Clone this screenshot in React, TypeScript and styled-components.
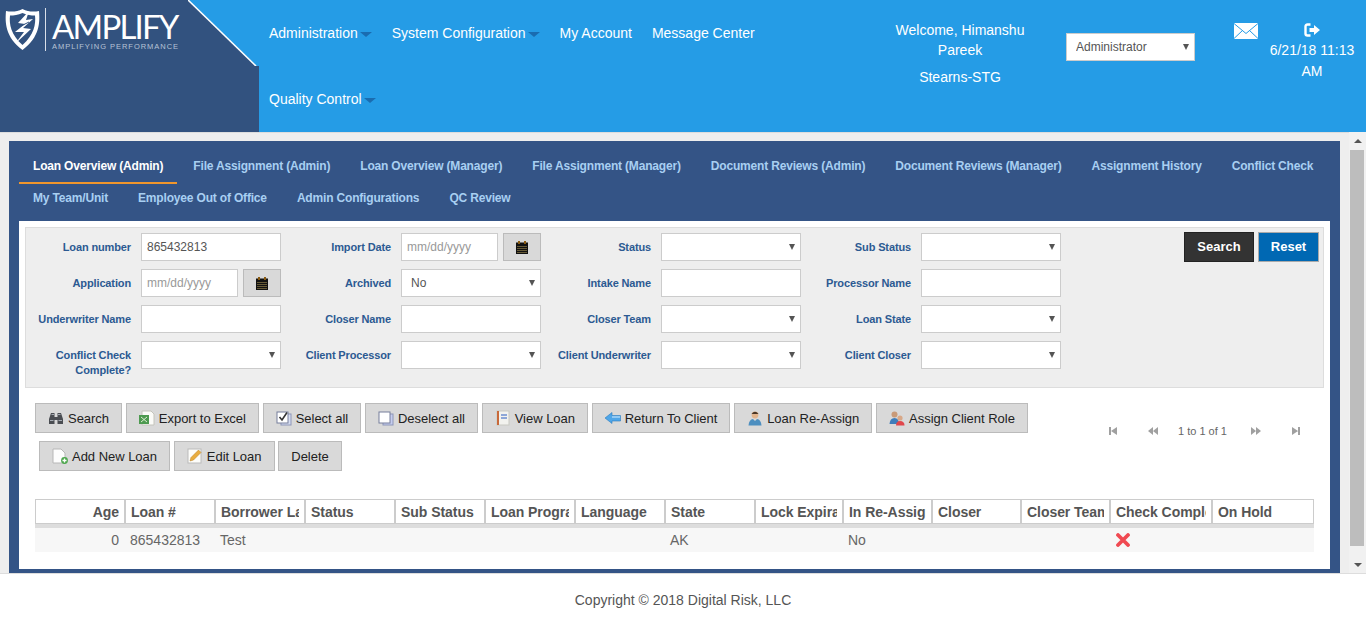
import React from 'react';
import styled, { createGlobalStyle } from 'styled-components';

const NAVY = '#32527f';
const BLUE = '#259ce6';

const GlobalStyle = createGlobalStyle`
  html, body {
    margin: 0;
    padding: 0;
    background: #fff;
    font-family: "Liberation Sans", Arial, sans-serif;
    overflow: hidden;
  }
  * {
    box-sizing: border-box;
  }
`;

const ShieldIcon = () => (
  <svg width="35" height="43" viewBox="0 0 35 43">
    <path
      d="M17.5 1 C23 4 29 4 34 3 C35 14 35 29 17.5 42 C0 29 0 14 1 3 C6 4 12 4 17.5 1 Z"
      fill="#fff"
    />
    <path
      d="M17.5 5 C13 7 9 7.5 5 7.5 C4 16 6 27 17.5 37 C29 27 31 16 30 7.5 C26 7.5 22 7 17.5 5 Z"
      fill={NAVY}
    />
    <path d="M24 3 L13 15 L20 16 L10 24 L19 24 L10 36 L26 21 L18 20 L28 11 L21 12 Z" fill="#fff" />
    <path d="M12 20 L24 14" stroke={NAVY} strokeWidth="1" />
  </svg>
);

const CalendarIcon = () => (
  <svg width="12" height="13" viewBox="0 0 12 13">
    <rect x="0" y="1.5" width="12" height="11.5" fill="#111" />
    <rect x="2" y="0" width="2" height="3" fill="#8a5a10" />
    <rect x="8" y="0" width="2" height="3" fill="#8a5a10" />
    <path d="M1 5.5 H11 M1 7.5 H11 M1 9.5 H11 M1 11.5 H11" stroke="#a08c50" strokeWidth="0.6" />
  </svg>
);

const EnvelopeIcon = () => (
  <svg width="24" height="16" viewBox="0 0 24 16">
    <rect width="24" height="16" fill="#fff" />
    <path d="M0 0.5 L12 10.5 L24 0.5 M0 15.5 L8.5 7.5 M24 15.5 L15.5 7.5" fill="none" stroke={BLUE} strokeWidth="1" />
  </svg>
);

const LogoutIcon = () => (
  <svg width="16" height="14" viewBox="0 0 16 14">
    <path d="M6.5 1.5 H3.5 Q1.5 1.5 1.5 3.5 V10.5 Q1.5 12.5 3.5 12.5 H6.5" fill="none" stroke="#fff" strokeWidth="2.4" />
    <path d="M5.5 5 H10 V2 L16 7 L10 12 V9 H5.5 Z" fill="#fff" />
  </svg>
);

const BinocularsIcon = () => (
  <svg width="16" height="16" viewBox="0 0 16 16">
    <path d="M3 3 H6.5 V7 H9.5 V3 H13 L15 9 V14 H9.5 V10 H6.5 V14 H1 V9 Z" fill="#4a4d52" />
    <path d="M2 10.5 H5.5 M10.5 10.5 H14 M3.5 4.5 H6 M10 4.5 H12.5" stroke="#a6acb4" strokeWidth="1" />
  </svg>
);

const ExcelIcon = () => (
  <svg width="16" height="16" viewBox="0 0 16 16">
    <path d="M3 1 H12 L15 4 V15 H3 Z" fill="#fbfbf8" stroke="#c4c4bc" />
    <rect x="0" y="5" width="10" height="9" fill="#4d9a50" />
    <path d="M2 7 L8 12 M8 7 L2 12" stroke="#dcecd0" strokeWidth="1" />
  </svg>
);

const SelectAllIcon = () => (
  <svg width="16" height="16" viewBox="0 0 16 16">
    <rect x="5" y="4" width="10" height="11" fill="#d6dcf0" stroke="#8d96b8" />
    <rect x="1" y="2" width="11" height="11" fill="#fff" stroke="#767f9c" />
    <path d="M3.5 7 L6 10 L11 2.5" fill="none" stroke="#333" strokeWidth="1.6" />
  </svg>
);

const DeselectAllIcon = () => (
  <svg width="16" height="16" viewBox="0 0 16 16">
    <rect x="5" y="4" width="10" height="11" fill="#c6cdef" stroke="#8d96b8" />
    <rect x="1" y="2" width="11" height="11" fill="#fff" stroke="#767f9c" />
  </svg>
);

const ViewLoanIcon = () => (
  <svg width="16" height="16" viewBox="0 0 16 16">
    <rect x="2" y="1" width="12" height="14" fill="#f2f2ee" stroke="#c9c9c2" />
    <rect x="2" y="1" width="2" height="14" fill="#c8693a" />
    <path d="M6 5 H12 M6 8 H12" stroke="#6d8fd0" strokeWidth="1.4" />
  </svg>
);

const ReturnIcon = () => (
  <svg width="16" height="16" viewBox="0 0 16 16">
    <path d="M0 8 L7 2.5 V5.5 H15.5 V11 H7 V13.5 Z" fill="#4fa6e8" stroke="#2a7cc0" strokeWidth="0.6" />
    <path d="M7 7 H15" stroke="#bfe2fa" strokeWidth="1.2" />
  </svg>
);

const UserIcon = () => (
  <svg width="16" height="16" viewBox="0 0 16 16">
    <circle cx="8" cy="5" r="3.4" fill="#e2b48c" />
    <path d="M4.5 4 Q8 -0.5 11.5 4 Z" fill="#4a3626" />
    <path d="M1.5 15.5 Q2 9.5 6 9 L8 11 L10 9 Q14 9.5 14.5 15.5 Z" fill="#4d8fc0" />
  </svg>
);

const UsersIcon = () => (
  <svg width="16" height="16" viewBox="0 0 16 16">
    <circle cx="5.5" cy="4.5" r="3" fill="#c99a78" />
    <path d="M0.5 14 Q1 8 5.5 8 Q10 8 10 14 Z" fill="#3f7dbb" />
    <circle cx="11" cy="8" r="2.6" fill="#d8a888" />
    <path d="M7 15.5 Q7 11 11 11 Q15.5 11 15.5 15.5 Z" fill="#e0474c" />
  </svg>
);

const AddDocIcon = () => (
  <svg width="16" height="16" viewBox="0 0 16 16">
    <path d="M1 1 H9 L13 5 V15 H1 Z" fill="#fdfdfd" stroke="#b7b7b7" />
    <circle cx="12.5" cy="12.5" r="3.4" fill="#4ca64c" />
    <path d="M10.5 12.5 H14.5 M12.5 10.5 V14.5" stroke="#fff" strokeWidth="1.3" />
  </svg>
);

const EditIcon = () => (
  <svg width="16" height="16" viewBox="0 0 16 16">
    <rect x="1" y="1" width="13" height="14" fill="#fdfdfa" stroke="#bbb" />
    <path d="M3 13 L4 9.5 L11.5 2 L14 4.5 L6.5 12 Z" fill="#e9ad3f" stroke="#b87e22" strokeWidth="0.5" />
  </svg>
);

const RedCross = () => (
  <svg width="16" height="14" viewBox="0 0 16 14">
    <path d="M3 2 L13 12 M13 2 L3 12" stroke="#f04a52" strokeWidth="3.8" strokeLinecap="round" />
  </svg>
);

const PagerIcon = ({ kind }: { kind: 'first' | 'prev' | 'next' | 'last' }) => (
  <svg width="10" height="10" viewBox="0 0 10 10" fill="#a0a0a0">
    {kind === 'first' && <path d="M1 1 H3 V9 H1 Z M9 1 V9 L3 5 Z" />}
    {kind === 'prev' && <path d="M5 1 V9 L0 5 Z M10 1 V9 L5 5 Z" />}
    {kind === 'next' && <path d="M0 1 V9 L5 5 Z M5 1 V9 L10 5 Z" />}
    {kind === 'last' && <path d="M1 1 V9 L7 5 Z M7 1 H9 V9 H7 Z" />}
  </svg>
);

const TAB_ROWS = [
  'Loan Overview (Admin)',
  'File Assignment (Admin)',
  'Loan Overview (Manager)',
  'File Assignment (Manager)',
  'Document Reviews (Admin)',
  'Document Reviews (Manager)',
  'Assignment History',
  'Conflict Check',
  'My Team/Unit',
  'Employee Out of Office',
  'Admin Configurations',
  'QC Review',
];

const TOP_ACTIONS = [
  { label: 'Search', icon: <BinocularsIcon /> },
  { label: 'Export to Excel', icon: <ExcelIcon /> },
  { label: 'Select all', icon: <SelectAllIcon /> },
  { label: 'Deselect all', icon: <DeselectAllIcon /> },
  { label: 'View Loan', icon: <ViewLoanIcon /> },
  { label: 'Return To Client', icon: <ReturnIcon /> },
  { label: 'Loan Re-Assign', icon: <UserIcon /> },
  { label: 'Assign Client Role', icon: <UsersIcon /> },
];

const BOTTOM_ACTIONS = [
  { label: 'Add New Loan', icon: <AddDocIcon /> },
  { label: 'Edit Loan', icon: <EditIcon /> },
  { label: 'Delete', icon: null },
];

const COLUMNS = [
  'Age',
  'Loan #',
  'Borrower Last Name',
  'Status',
  'Sub Status',
  'Loan Program',
  'Language',
  'State',
  'Lock Expiration',
  'In Re-Assignment',
  'Closer',
  'Closer Team',
  'Check Complete',
  'On Hold',
];

const ROW: React.ReactNode[] = [
  '0',
  '865432813',
  'Test',
  '',
  '',
  '',
  '',
  'AK',
  '',
  'No',
  '',
  '',
  <RedCross key="cross" />,
  '',
];

const DateField = ({ id }: { id: string }) => (
  <DateGroup>
    <Field id={id} placeholder="mm/dd/yyyy" />
    <CalendarButton type="button">
      <CalendarIcon />
    </CalendarButton>
  </DateGroup>
);

const SelectField = ({ value, options = [''] }: { value?: string; options?: string[] }) => (
  <SelectWrap>
    <Select defaultValue={value}>
      {options.map((option) => (
        <option key={option}>{option}</option>
      ))}
    </Select>
  </SelectWrap>
);

const App = () => (
  <>
    <GlobalStyle />
    <Header>
      <LogoPanel>
        <LogoMark>
          <ShieldIcon />
          <LogoDivider />
          <LogoWords>
            <LogoName>AMPLIFY</LogoName>
            <LogoTagline>AMPLIFYING PERFORMANCE</LogoTagline>
          </LogoWords>
        </LogoMark>
        <LogoCorner viewBox="0 0 71 66" width="71" height="66">
          <polygon points="0,0 71,0 71,66 68,66" fill={BLUE} />
          <line x1="0" y1="0" x2="68" y2="66" stroke="#fff" strokeWidth="1.6" />
        </LogoCorner>
      </LogoPanel>
      <Nav>
        <NavItem $caret>Administration</NavItem>
        <NavItem $caret>System Configuration</NavItem>
        <NavItem>My Account</NavItem>
        <NavItem>Message Center</NavItem>
        <NavItem $caret>Quality Control</NavItem>
      </Nav>
      <Welcome>
        <WelcomeName>Welcome, Himanshu Pareek</WelcomeName>
        <WelcomeOrg>Stearns-STG</WelcomeOrg>
      </Welcome>
      <RoleSelect>
        <SelectField value="Administrator" options={['Administrator']} />
      </RoleSelect>
      <MailLink>
        <EnvelopeIcon />
      </MailLink>
      <Session>
        <LogoutIcon />
        <SessionDate>6/21/18 11:13 AM</SessionDate>
      </Session>
    </Header>

    <Main>
      <Panel>
        <Tabs>
          {TAB_ROWS.map((tab, index) => (
            <Tab key={tab} $active={index === 0}>
              {tab}
            </Tab>
          ))}
        </Tabs>
        <Content>
          <Filters>
            <FilterGrid>
              <Label>Loan number</Label>
              <Field defaultValue="865432813" />
              <Label>Import Date</Label>
              <DateField id="importDate" />
              <Label>Status</Label>
              <SelectField />
              <Label>Sub Status</Label>
              <SelectField />

              <Label>Application</Label>
              <DateField id="applicationDate" />
              <Label>Archived</Label>
              <SelectField value="No" options={['No', 'Yes']} />
              <Label>Intake Name</Label>
              <Field />
              <Label>Processor Name</Label>
              <Field />

              <Label>Underwriter Name</Label>
              <Field />
              <Label>Closer Name</Label>
              <Field />
              <Label>Closer Team</Label>
              <SelectField />
              <Label>Loan State</Label>
              <SelectField />

              <Label>Conflict Check Complete?</Label>
              <SelectField />
              <Label>Client Processor</Label>
              <SelectField />
              <Label>Client Underwriter</Label>
              <SelectField />
              <Label>Client Closer</Label>
              <SelectField />
            </FilterGrid>
            <FilterActions>
              <SearchButton type="button">Search</SearchButton>
              <ResetButton type="button">Reset</ResetButton>
            </FilterActions>
          </Filters>

          <Toolbar>
            <ActionGroups>
              <ActionRow>
                {TOP_ACTIONS.map(({ label, icon }) => (
                  <ActionButton key={label} type="button">
                    {icon}
                    {label}
                  </ActionButton>
                ))}
              </ActionRow>
              <ActionRow $indent>
                {BOTTOM_ACTIONS.map(({ label, icon }) => (
                  <ActionButton key={label} type="button">
                    {icon}
                    {label}
                  </ActionButton>
                ))}
              </ActionRow>
            </ActionGroups>
            <Pager>
              <PagerIcon kind="first" />
              <PagerIcon kind="prev" />
              <PagerText>1 to 1 of 1</PagerText>
              <PagerIcon kind="next" />
              <PagerIcon kind="last" />
            </Pager>
          </Toolbar>

          <Table>
            <HeaderRow>
              {COLUMNS.map((column, index) => (
                <HeaderCell key={column} $right={index === 0}>
                  <HeaderText>{column}</HeaderText>
                </HeaderCell>
              ))}
            </HeaderRow>
            <DataRow>
              {ROW.map((value, index) => (
                <DataCell key={COLUMNS[index]} $right={index === 0}>
                  {value}
                </DataCell>
              ))}
            </DataRow>
          </Table>
        </Content>
      </Panel>
      <Scrollbar>
        <ScrollArrow $up />
        <ScrollThumb />
        <ScrollArrow />
      </Scrollbar>
    </Main>

    <Footer>Copyright © 2018 Digital Risk, LLC</Footer>
  </>
);

export default App;

const Header = styled.header`
  display: flex;
  height: 132px;
  background: ${BLUE};
  color: #fff;
  font-size: 14px;
`;

const LogoPanel = styled.div`
  position: relative;
  flex: 0 0 259px;
  background: ${NAVY};
`;

const LogoMark = styled.div`
  display: flex;
  align-items: flex-start;
  padding: 8px 0 0 5px;
`;

const LogoDivider = styled.div`
  width: 1px;
  height: 43px;
  margin: 0 6px 0 5px;
  background: #d8dfe9;
`;

const LogoWords = styled.div`
  display: flex;
  flex-direction: column;
  padding-top: 2px;
`;

const LogoName = styled.span`
  font-family: Lato, "Liberation Sans", sans-serif;
  font-size: 33px;
  font-weight: 400;
  line-height: 33px;
  letter-spacing: -1.8px;
  color: #fff;
`;

const LogoTagline = styled.span`
  margin-top: -1px;
  font-size: 7.5px;
  line-height: 9px;
  letter-spacing: 0.96px;
  white-space: nowrap;
  color: #b7c3d6;
`;

const LogoCorner = styled.svg`
  position: absolute;
  top: 0;
  right: 0;
  display: block;
`;

const Nav = styled.nav`
  display: flex;
  flex-wrap: wrap;
  align-content: flex-start;
  flex: 0 0 621px;
`;

const NavItem = styled.a<{ $caret?: boolean }>`
  display: flex;
  align-items: center;
  height: 66px;
  padding: 0 10px;
  color: #fff;

  ${({ $caret }) =>
    $caret &&
    `
    &::after {
      content: '';
      margin: 2px 0 0 2px;
      border-style: solid;
      border-width: 5px 6px 0;
      border-color: #1a6cb0 transparent transparent;
    }
  `}
`;

const Welcome = styled.div`
  flex: 0 0 160px;
  padding: 20px 0 0;
  text-align: center;
  line-height: 20px;
`;

const WelcomeName = styled.div`
  width: 150px;
  margin: 0 auto;
`;

const WelcomeOrg = styled.div`
  margin-top: 7px;
`;

const RoleSelect = styled.div`
  flex: 0 0 129px;
  margin: 33px 0 0 26px;
`;

const MailLink = styled.a`
  display: block;
  height: 16px;
  margin: 23px 0 0 39px;
`;

const Session = styled.div`
  display: flex;
  flex-direction: column;
  align-items: center;
  width: 90px;
  margin: 23px 0 0 9px;
`;

const SessionDate = styled.div`
  margin-top: 3px;
  text-align: center;
  line-height: 21px;
`;

const Main = styled.main`
  display: flex;
  height: 442px;
  padding: 9px 0 0 9px;
  background: #eee;
  box-shadow: inset 0 1px 0 #ddd;
  border-bottom: 1px solid #ddd;
`;

const Panel = styled.section`
  flex: 0 0 1331px;
  padding: 9px 10px 4px 10px;
  background: #345486;
`;

const Tabs = styled.div`
  display: flex;
  flex-wrap: wrap;
`;

const Tab = styled.a<{ $active?: boolean }>`
  height: 34px;
  margin: 0 2px -2px 0;
  padding: 0 14px;
  font-size: 12px;
  font-weight: bold;
  line-height: 32px;
  letter-spacing: -0.175px;
  color: ${({ $active }) => ($active ? '#fff' : '#a8cff2')};
  border-bottom: 2px solid ${({ $active }) => ($active ? '#f0962c' : 'transparent')};
`;

const Content = styled.div`
  height: 348px;
  margin-top: 7px;
  padding: 6px;
  background: #fff;
`;

const Filters = styled.div`
  display: flex;
  justify-content: space-between;
  height: 161px;
  padding: 5px 4px 0 0;
  background: #eee;
  border: 1px solid #ddd;
`;

const FilterGrid = styled.div`
  display: grid;
  grid-template-columns: 105px 140px 100px 140px 100px 140px 100px 140px;
  grid-auto-rows: 28px;
  gap: 8px 10px;
`;

const Label = styled.label`
  padding-top: 7px;
  font-size: 11px;
  font-weight: bold;
  line-height: 15px;
  letter-spacing: -0.13px;
  text-align: right;
  color: #2c5a92;
`;

const Field = styled.input`
  width: 100%;
  min-width: 0;
  height: 28px;
  padding: 0 5px;
  font-family: inherit;
  font-size: 12px;
  color: #555;
  background: #fff;
  border: 1px solid #ccc;
  border-radius: 0;
  outline: none;

  &::placeholder {
    color: #999;
    opacity: 1;
  }
`;

const DateGroup = styled.div`
  display: grid;
  grid-template-columns: 97px 38px;
  gap: 5px;
`;

const CalendarButton = styled.button`
  display: flex;
  align-items: center;
  justify-content: center;
  height: 28px;
  padding: 0;
  background: #d9d9d9;
  border: 1px solid #bbb;
`;

const SelectWrap = styled.div`
  position: relative;
  height: 28px;

  &::after {
    content: '';
    position: absolute;
    top: 11px;
    right: 6px;
    border-style: solid;
    border-width: 6px 3.5px 0;
    border-color: #555 transparent transparent;
    pointer-events: none;
  }
`;

const Select = styled.select`
  display: block;
  width: 100%;
  height: 28px;
  padding: 0 9px;
  font-family: inherit;
  font-size: 12px;
  color: #555;
  background: #fff;
  border: 1px solid #ccc;
  border-radius: 0;
  appearance: none;
  outline: none;
`;

const FilterActions = styled.div`
  display: flex;
  gap: 4px;
  margin-top: -1px;
`;

const SearchButton = styled.button`
  width: 70px;
  height: 30px;
  padding: 0 0 2px;
  font-family: inherit;
  font-size: 13px;
  font-weight: bold;
  color: #fff;
  background: #333;
  border: 1px solid #222;
`;

const ResetButton = styled(SearchButton)`
  width: 61px;
  background: #0068b3;
  border-color: #aaa;
`;

const Toolbar = styled.div`
  display: flex;
  height: 111px;
  padding: 15px 0 0 10px;
`;

const ActionGroups = styled.div`
  display: flex;
  flex: 0 0 1060px;
  flex-direction: column;
  gap: 8px;
`;

const ActionRow = styled.div<{ $indent?: boolean }>`
  display: flex;
  gap: 3.8px;
  margin-left: ${({ $indent }) => ($indent ? '4px' : '0')};
`;

const ActionButton = styled.button`
  display: inline-flex;
  align-items: center;
  gap: 4px;
  height: 30px;
  padding: 0 12px;
  font-family: inherit;
  font-size: 13px;
  letter-spacing: -0.025px;
  white-space: nowrap;
  color: #222;
  background: #d9d9d9;
  border: 1px solid #bbb;
`;

const Pager = styled.div`
  display: flex;
  align-items: center;
  gap: 30px;
  height: 10px;
  margin: 23px 0 0 13px;
`;

const PagerText = styled.span`
  margin: 0 -6px 0 -10px;
  font-size: 11px;
  white-space: nowrap;
  color: #666;
`;

const COLUMN_TEMPLATE = '90px 90px 90px 90px 90px 90px 90px 90px 88px 89px 89px 89px 102px 102px';

const Table = styled.div`
  width: 1279px;
  margin-left: 10px;
`;

const HeaderRow = styled.div`
  display: grid;
  grid-template-columns: ${COLUMN_TEMPLATE};
  height: 29px;
  border-bottom: 4px solid #ddd;
`;

const HeaderCell = styled.div<{ $right?: boolean }>`
  min-width: 0;
  padding: 1px 5px 0;
  font-size: 14px;
  font-weight: bold;
  line-height: 22px;
  letter-spacing: -0.05px;
  text-align: ${({ $right }) => ($right ? 'right' : 'left')};
  color: #555;
  background: #fff;
  border: 1px solid #ccc;
`;

const HeaderText = styled.div`
  overflow: hidden;
  white-space: nowrap;
`;

const DataRow = styled.div`
  display: grid;
  grid-template-columns: ${COLUMN_TEMPLATE};
  height: 24px;
  background: #f7f7f7;
`;

const DataCell = styled.div<{ $right?: boolean }>`
  display: flex;
  align-items: center;
  justify-content: ${({ $right }) => ($right ? 'flex-end' : 'flex-start')};
  padding: 0 6px 0 5px;
  font-size: 14px;
  color: #666;
`;

const Scrollbar = styled.div`
  display: flex;
  flex: 0 0 17px;
  flex-direction: column;
  margin: -9px 0 0 9px;
  background: #f1f1f1;
`;

const ScrollThumb = styled.div`
  flex: 1;
  margin: 1px 2px 10px 1px;
  background: #bdbdbd;
`;

const ScrollArrow = styled.div<{ $up?: boolean }>`
  display: flex;
  flex: 0 0 17px;
  align-items: center;
  justify-content: center;

  &::before {
    content: '';
    border-style: solid;
    border-color: #555 transparent;
    border-width: ${({ $up }) => ($up ? '0 4px 4px' : '4px 4px 0')};
  }
`;

const Footer = styled.footer`
  height: 44px;
  padding-top: 18px;
  font-size: 14px;
  line-height: 16px;
  text-align: center;
  color: #555;
`;
